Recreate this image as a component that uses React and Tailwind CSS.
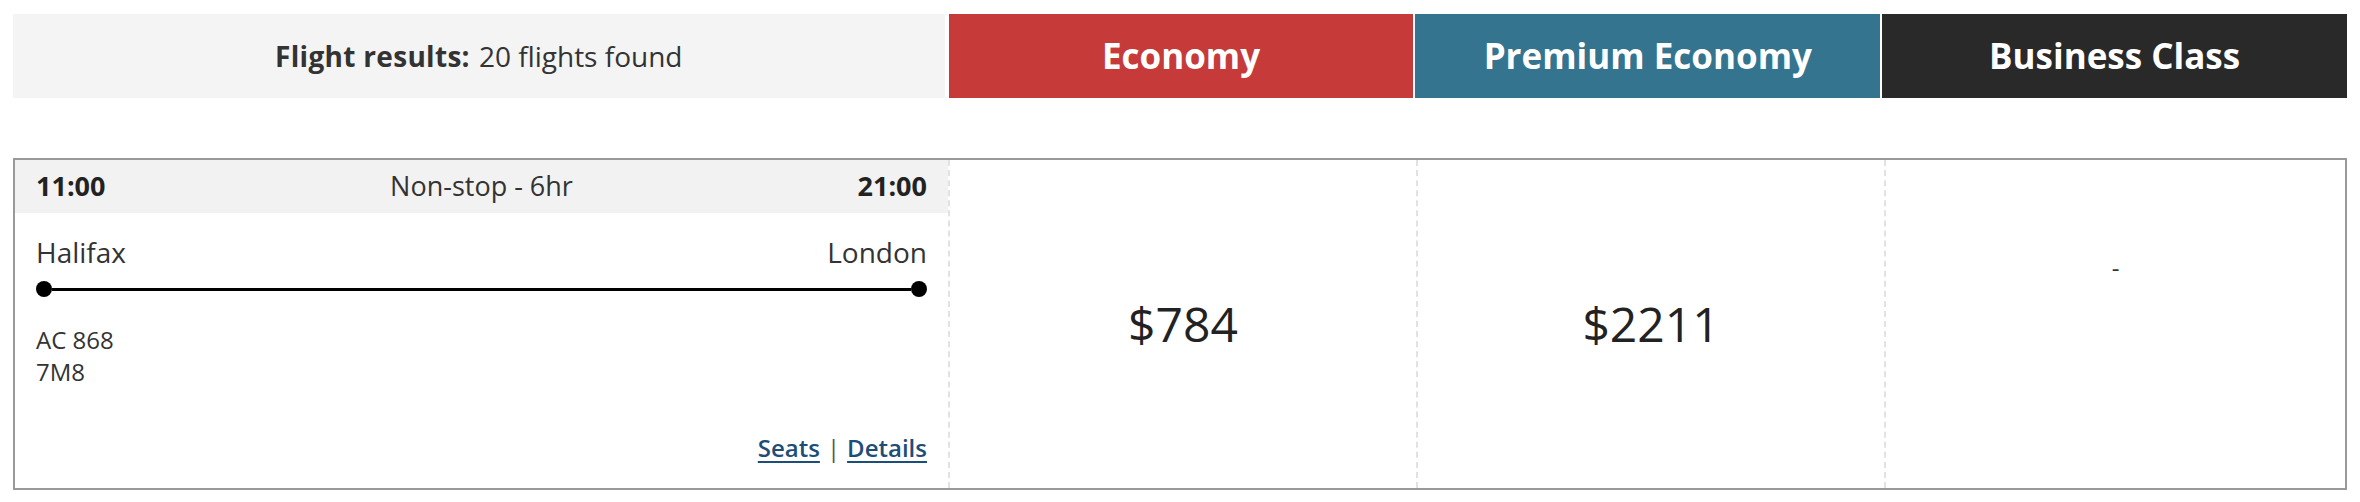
const fares = [
  { label: "Economy", bg: "bg-[#c73a3a]", price: "$784" },
  { label: "Premium Economy", bg: "bg-[#34748f]", price: "$2211" },
  { label: "Business Class", bg: "bg-[#292929]", price: null },
];

const FareHeader = ({ label, bg, gap }) => (
  <div
    className={`${bg} ${gap} w-[466px] flex items-center justify-center text-white text-[35px] font-bold`}
  >
    {label}
  </div>
);

const FlightInfo = () => (
  <div className="w-[935px] flex flex-col border-r-2 border-dashed border-[#e2e2e2]">
    <div className="h-[53px] bg-[#f2f2f2] px-[21px] flex items-center justify-between text-[27px] text-[#222]">
      <span className="font-bold">11:00</span>
      <span className="text-[#333]">Non-stop - 6hr</span>
      <span className="font-bold">21:00</span>
    </div>
    <div className="flex-1 flex flex-col px-[21px] pb-[24px]">
      <div className="pt-[20px] flex justify-between text-[28px] leading-[38px] text-[#333]">
        <span>Halifax</span>
        <span>London</span>
      </div>
      <div className="mt-[10px] flex items-center">
        <span className="w-[16px] h-[16px] rounded-full bg-black" />
        <span className="flex-1 h-[3px] bg-black" />
        <span className="w-[16px] h-[16px] rounded-full bg-black" />
      </div>
      <div className="mt-[27px] text-[24px] leading-[32px] text-[#333]">
        <div>AC 868</div>
        <div>7M8</div>
      </div>
      <div className="mt-auto flex justify-end items-center text-[24px] leading-[32px]">
        <a className="font-semibold text-[#1d4e77] underline underline-offset-4">Seats</a>
        <span className="mx-[7px] text-[#555]">|</span>
        <a className="font-semibold text-[#1d4e77] underline underline-offset-4">Details</a>
      </div>
    </div>
  </div>
);

export default function App() {
  return (
    <div className="bg-white min-h-screen px-[13px] pt-[14px] font-['Open_Sans',sans-serif] text-[#333]">
      <div className="flex h-[84px]">
        <div className="w-[934px] bg-[#f4f4f4] flex items-center justify-center text-[28px] text-[#333]">
          <span className="font-bold mr-[9px] tracking-[0.3px]">Flight results:</span>
          <span>20 flights found</span>
        </div>
        <FareHeader {...fares[0]} gap="ml-[4px]" />
        <FareHeader {...fares[1]} gap="ml-[2px]" />
        <FareHeader {...fares[2]} gap="ml-[2px]" />
      </div>

      <div className="mt-[60px] h-[332px] border-2 border-[#999] flex">
        <FlightInfo />
        <div className="w-[468px] flex items-center justify-center border-r-2 border-dashed border-[#e2e2e2] text-[48px] text-[#222]">
          {fares[0].price}
        </div>
        <div className="w-[468px] flex items-center justify-center border-r-2 border-dashed border-[#e2e2e2] text-[48px] text-[#222]">
          {fares[1].price}
        </div>
        <div className="flex-1 flex justify-center pt-[92px] text-[24px] leading-[32px] text-[#333]">
          -
        </div>
      </div>
    </div>
  );
}
